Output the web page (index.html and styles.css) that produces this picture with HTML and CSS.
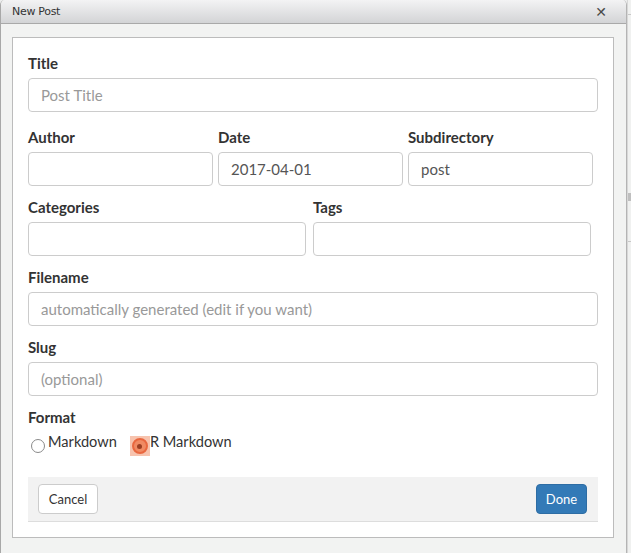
FILE: index.html
```html
<!DOCTYPE html>
<html>
<head>
<meta charset="utf-8">
<link rel="stylesheet" href="styles.css">
</head>
<body>
<div class="desk">
  <div class="window">
    <div class="titlebar">
      <span class="wtitle">New Post</span>
      <span class="close">✕</span>
    </div>
    <div class="wbody">
      <div class="panel">
        <div class="group g-title">
          <label>Title</label>
          <div class="input placeholder">Post Title</div>
        </div>
        <div class="row row3">
          <div class="group">
            <label>Author</label>
            <div class="input"></div>
          </div>
          <div class="group">
            <label>Date</label>
            <div class="input value">2017-04-01</div>
          </div>
          <div class="group">
            <label>Subdirectory</label>
            <div class="input value">post</div>
          </div>
        </div>
        <div class="row row2">
          <div class="group">
            <label>Categories</label>
            <div class="input"></div>
          </div>
          <div class="group">
            <label>Tags</label>
            <div class="input"></div>
          </div>
        </div>
        <div class="group">
          <label>Filename</label>
          <div class="input placeholder">automatically generated (edit if you want)</div>
        </div>
        <div class="group">
          <label>Slug</label>
          <div class="input placeholder">(optional)</div>
        </div>
        <div class="group g-format">
          <label>Format</label>
          <div class="radios">
            <span class="radio"><span class="circle"></span><span class="rtext">Markdown</span></span>
            <span class="radio checked"><span class="hl"><span class="circle on"><span class="dot"></span></span></span><span class="rtext">R Markdown</span></span>
          </div>
        </div>
        <div class="footer">
          <span class="btn cancel">Cancel</span>
          <span class="btn done">Done</span>
        </div>
      </div>
    </div>
  </div>
  <div class="behind">
    <div class="bline l1"></div>
    <div class="bline l2"></div>
    <div class="bline l3"></div>
  </div>
</div>
</body>
</html>
```

FILE: styles.css
```css
html, body {
  margin: 0;
  padding: 0;
}
body {
  width: 631px;
  height: 553px;
  overflow: hidden;
  background: #eceded;
  font-family: Lato, "Open Sans", sans-serif;
}
.desk {
  display: flex;
  height: 553px;
}
.window {
  width: 625px;
  height: 553px;
  border-left: 1px solid #a8a8a8;
  border-right: 1px solid #b4b4b4;
  border-top-right-radius: 5px;
  border-top-left-radius: 5px;
  overflow: hidden;
  background: #f2f3f2;
  flex: none;
}
.behind {
  flex: 1;
  background: #f0f1f0;
  display: flex;
  flex-direction: column;
  border-left: 1px solid #d8d8d8;
}
.bline { height: 1px; background: #c8c8c8; }
.l1 { margin-top: 14px; }
.l2 { margin-top: 178px; background: #bfbfbf; height: 8px; }
.l3 { margin-top: 40px; }
.titlebar {
  height: 23px;
  border-bottom: 1px solid #a9a9a9;
  background: linear-gradient(#f3f3f4, #d3d4d6);
  display: flex;
  align-items: center;
  justify-content: space-between;
  padding: 0 19px 0 11px;
  box-sizing: content-box;
}
.wtitle {
  font-family: "DejaVu Sans", sans-serif;
  font-size: 11px;
  color: #333;
  letter-spacing: -0.3px;
}
.close {
  font-family: "DejaVu Sans", sans-serif;
  font-size: 14px;
  font-weight: bold;
  color: #4a4a4a;
}
.wbody {
  padding: 13px 12px 0 11px;
}
.panel {
  width: 570px;
  height: 469px;
  background: #fff;
  border: 1px solid #bcbcbc;
  padding: 15px 15px 15px 15px;
  display: flex;
  flex-direction: column;
}
.group {
  display: flex;
  flex-direction: column;
  margin-bottom: 11px;
}
.g-title { margin-bottom: 15px; }
label {
  font-weight: 700;
  font-size: 15px;
  line-height: 20px;
  color: #333;
  margin-bottom: 5px;
}
.input {
  height: 32px;
  border: 1px solid #cccccc;
  border-radius: 4px;
  padding: 0 12px;
  font-size: 15px;
  line-height: 32px;
  color: #555;
  white-space: nowrap;
}
.placeholder { color: #999; }
.row {
  display: grid;
}
.row .group { margin-bottom: 11px; }
.row3 {
  grid-template-columns: 185px 185px 185px;
  column-gap: 5px;
}
.row2 {
  grid-template-columns: 278px 278px;
  column-gap: 7px;
}
.g-format { margin-bottom: 0; }
.g-format label { margin-bottom: 9px; }
.radios {
  display: flex;
  align-items: flex-start;
  height: 41px;
}
.radio {
  display: flex;
  align-items: flex-start;
  font-size: 14.6px;
  color: #333;
  line-height: 14px;
}
.radio .circle {
  width: 12px;
  height: 12px;
  border: 1px solid #8a8a8a;
  border-radius: 50%;
  margin: 3px 3px 0 3px;
  background: #fff;
}
.radio .rtext { margin-top: -1px; }
.radio.checked { margin-left: 13px; }
.hl {
  width: 20px;
  height: 20px;
  background: #f7c3ae;
  display: flex;
  align-items: center;
  justify-content: center;
}
.radio .circle.on {
  margin: 0;
  width: 12px;
  height: 12px;
  border: 2px solid #e9673f;
  background: #f08a63;
  display: flex;
  align-items: center;
  justify-content: center;
}
.dot {
  width: 5px;
  height: 5px;
  border-radius: 50%;
  background: #9c3e22;
}
.footer {
  height: 44px;
  background: #f2f2f2;
  border-bottom: 1px solid #dddddd;
  display: flex;
  align-items: center;
  justify-content: space-between;
  padding: 0 11px 0 10px;
}
.btn {
  height: 28px;
  line-height: 28px;
  border-radius: 4px;
  font-size: 13px;
  text-align: center;
  box-sizing: content-box;
}
.cancel {
  width: 58px;
  border: 1px solid #cccccc;
  background: #fff;
  color: #333;
}
.done {
  width: 49px;
  border: 1px solid #2e6da4;
  background: #337ab7;
  color: #fff;
}
```
